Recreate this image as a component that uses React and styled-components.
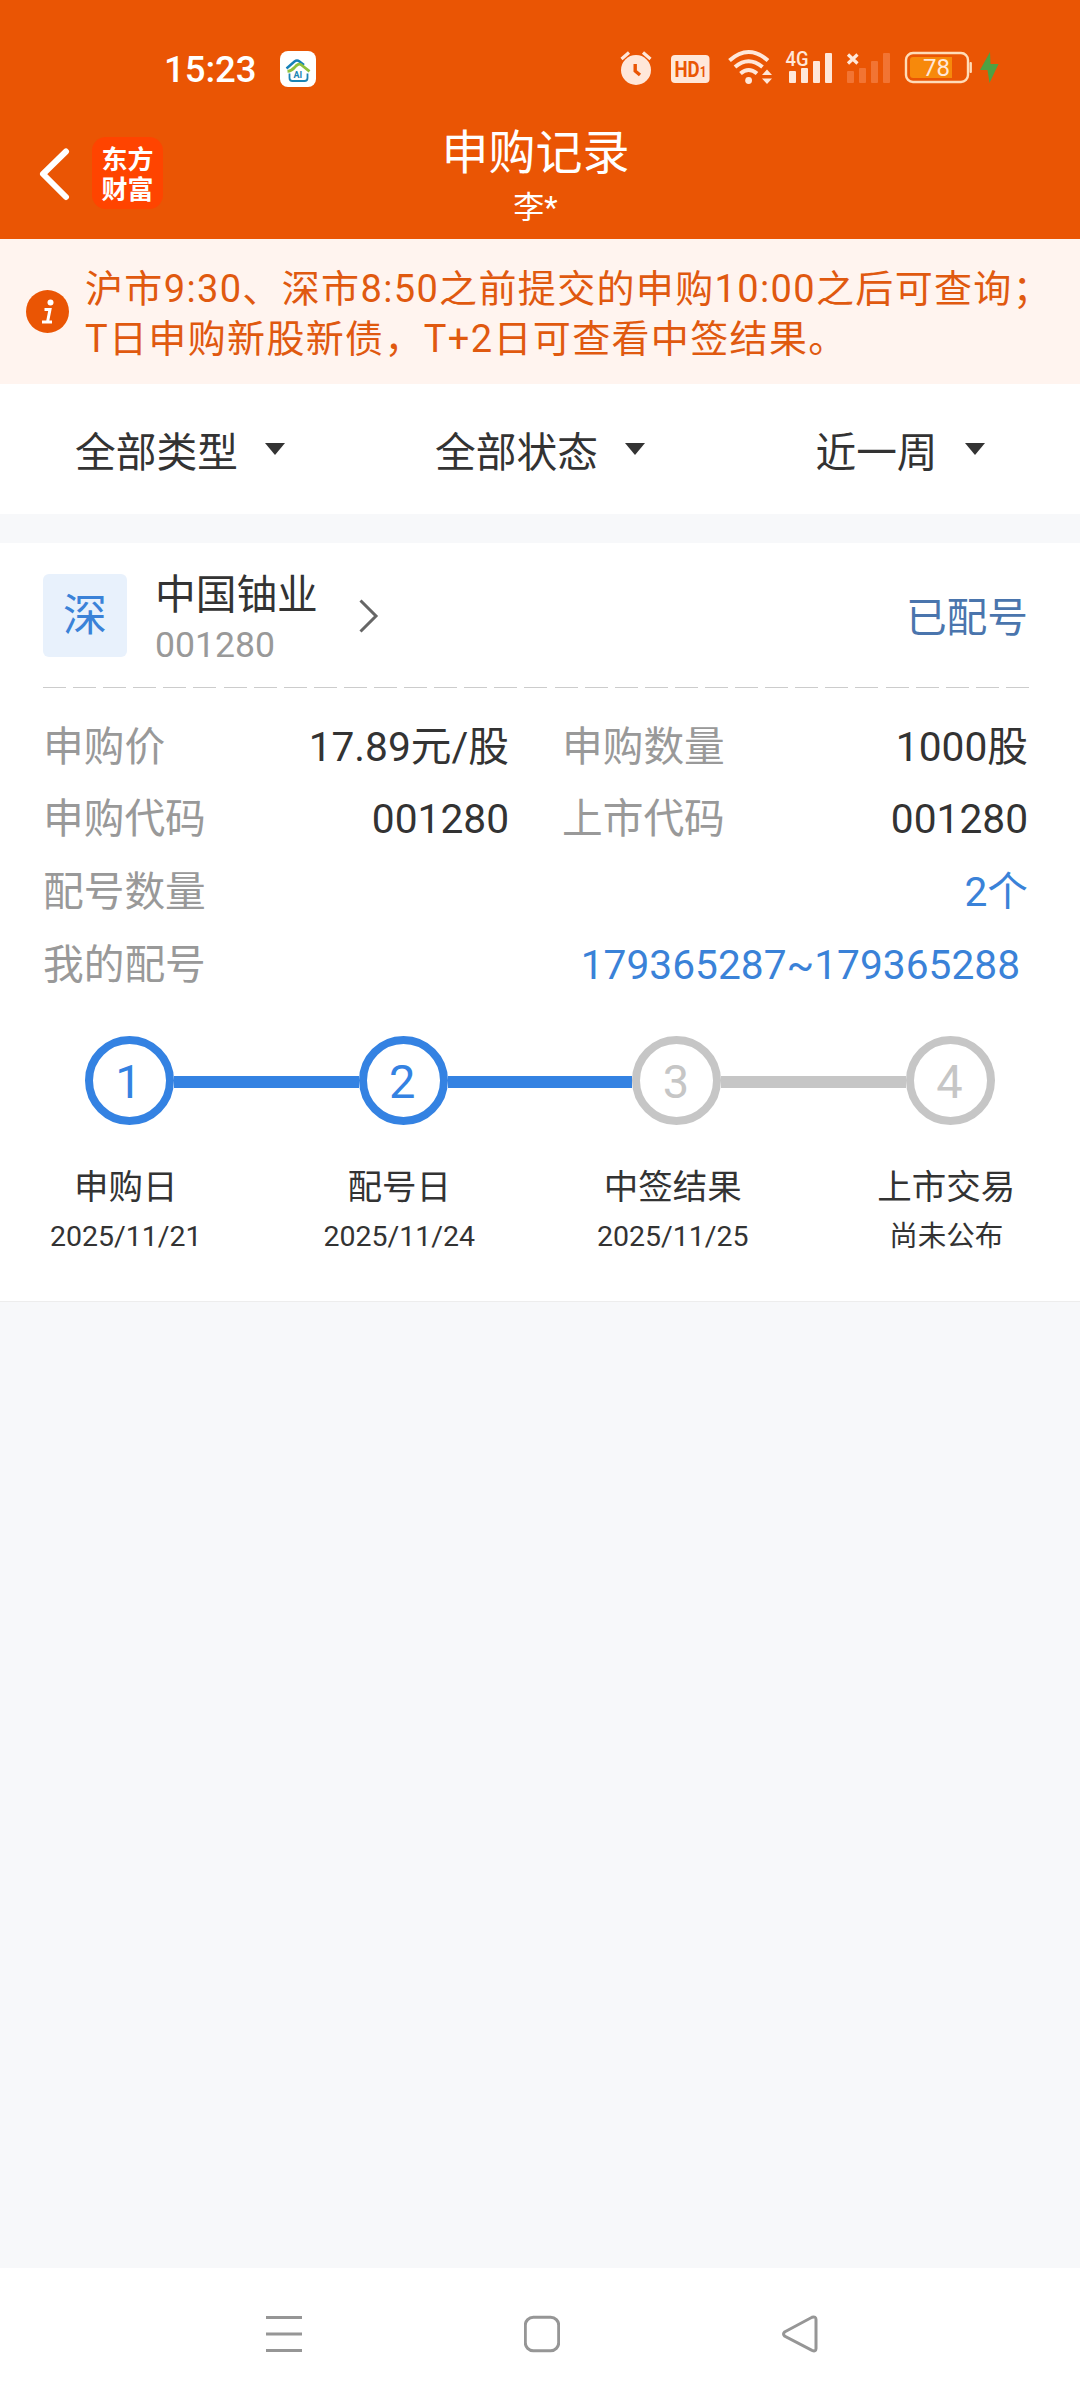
import React from "react";
import styled, { createGlobalStyle } from "styled-components";

const filters = ["全部类型", "全部状态", "近一周"];

const steps = [
  { no: 1, title: "申购日", date: "2025/11/21", done: true, lineDone: true },
  { no: 2, title: "配号日", date: "2025/11/24", done: true, lineDone: true },
  { no: 3, title: "中签结果", date: "2025/11/25", done: false, lineDone: false },
  { no: 4, title: "上市交易", date: "尚未公布", done: false },
];

const StatusBar = () => (
  <StatusRow>
    <Clock>15:23</Clock>
    <AppIcon>
      <svg width="36" height="36" viewBox="0 0 36 36" fill="none">
        <path d="M6.5 15.5 L14.5 8.5 Q17 6.5 19.5 8.5 L24 12" stroke="#1680b8" strokeWidth="2.4" />
        <path d="M7.5 18.3 Q11.5 18 14.5 14.5 Q18.5 9.5 21.5 12 L29.5 18.3" stroke="#8fc13e" strokeWidth="2.8" />
        <path d="M9.5 20.5 V25 Q9.5 28 12.5 28 H24.5 Q27.5 28 27.5 25 V20.5" stroke="#1b84b4" strokeWidth="1.8" />
        <StatusText x="13.5" y="25" $size={9} fill="#1b84b4">AI</StatusText>
      </svg>
    </AppIcon>
    <StatusIcons width="400" height="60" viewBox="610 40 400 60" fill="#ffe7d9">
      <circle cx="636" cy="71" r="15" />
      <path d="M621.5 60 L629 53.5 M650.5 60 L643 53.5" stroke="#ffe7d9" strokeWidth="3.2" />
      <path d="M635.2 65 V72 L640 76" stroke="#ea5504" strokeWidth="3.4" fill="none" />

      <rect x="671" y="56" width="38.5" height="28" rx="4" />
      <StatusText x="674.5" y="78" $size={22} textLength="32" lengthAdjust="spacingAndGlyphs" fill="#ea5504">
        HD<tspan fontSize="14">1</tspan>
      </StatusText>

      <g fill="none" stroke="#ffe7d9" strokeWidth="4">
        <path d="M729.5 61.5 Q748.5 44.5 768 61.5" />
        <path d="M735 68 Q748.5 56.5 762.5 68" />
        <path d="M740.5 74.5 Q748.5 67.5 757 74.5" />
      </g>
      <circle cx="748.6" cy="81.5" r="3.4" />
      <path d="M762 76 L767 70.5 L772 76 Z M762 79.5 H772 L767 85 Z" />

      <StatusText x="785.5" y="67" $size={20} $weight={500} textLength="23" lengthAdjust="spacingAndGlyphs">4G</StatusText>
      <rect x="789" y="72" width="7" height="12" rx="1" />
      <rect x="801" y="69" width="7" height="15" rx="1" />
      <rect x="813" y="62" width="7" height="22" rx="1" />
      <rect x="825" y="54" width="7" height="30" rx="1" />

      <path d="M848 55.5 L857.5 64.5 M857.5 55.5 L848 64.5" stroke="#ffe7d9" strokeWidth="3.2" />
      <g fill="#f27433">
        <rect x="847" y="72" width="7" height="12" rx="1" />
        <rect x="859" y="69" width="7" height="15" rx="1" />
        <rect x="871" y="62" width="7" height="22" rx="1" />
        <rect x="883" y="54" width="7" height="30" rx="1" />
      </g>

      <rect x="906" y="54" width="62" height="29" rx="7" fill="none" stroke="#ffdcb8" strokeWidth="2.4" />
      <path d="M913 58 H952 V79 H913 Q910 79 910 76 V61 Q910 58 913 58 Z" fill="#f7890b" />
      <rect x="969.5" y="63" width="2.4" height="11" rx="1" fill="#ffdcb8" />
      <StatusText x="923" y="77" $size={24} $weight={400} textLength="27" lengthAdjust="spacingAndGlyphs">78</StatusText>
      <path d="M990 53 L980 71 H987.5 L989.5 84 L998.5 65 H990.5 Z" fill="#4ea143" />
    </StatusIcons>
  </StatusRow>
);

const NavBar = () => (
  <NavRow>
    <BackIcon width="32" height="54" viewBox="0 0 32 54">
      <path d="M28 4.5 L5 27 L28 50" />
    </BackIcon>
    <Logo>
      <span>东方</span>
      <span>财富</span>
    </Logo>
    <Titles>
      <Title>申购记录</Title>
      <Owner>李*</Owner>
    </Titles>
  </NavRow>
);

const InfoItem = ({ label, value }) => (
  <Info>
    <Label>{label}</Label>
    <Value>{value}</Value>
  </Info>
);

const App = () => {
  return (
    <Page>
      <GlobalStyle />
      <Header>
        <StatusBar />
        <NavBar />
      </Header>
      <Notice>
        <NoticeIcon width="43" height="43" viewBox="0 0 43 43">
          <circle cx="21.5" cy="21.5" r="21.5" fill="#ea5504" />
          <circle cx="24.5" cy="12.5" r="3" fill="#fff" />
          <path d="M18.5 19.5 H24 L21.5 32 M16 32 H26" stroke="#fff" strokeWidth="3" fill="none" />
        </NoticeIcon>
        <NoticeText>
          <div>沪市9:30、深市8:50之前提交的申购10:00之后可查询；</div>
          <div>T日申购新股新债，T+2日可查看中签结果。</div>
        </NoticeText>
      </Notice>
      <FilterBar>
        {filters.map(name => (
          <Filter key={name}>
            {name}
            <Caret />
          </Filter>
        ))}
      </FilterBar>
      <Card>
        <CardHead>
          <Market>深</Market>
          <Stock>
            <StockName>中国铀业</StockName>
            <StockCode>001280</StockCode>
          </Stock>
          <Arrow width="20" height="34" viewBox="0 0 20 34">
            <path d="M1.5 1.5 L17 17 L1.5 32.5" />
          </Arrow>
          <State>已配号</State>
        </CardHead>
        <Dashes />
        <InfoGrid>
          <InfoItem label="申购价" value="17.89元/股" />
          <InfoItem label="申购数量" value="1000股" />
          <InfoItem label="申购代码" value="001280" />
          <InfoItem label="上市代码" value="001280" />
        </InfoGrid>
        <WideInfo>
          <Label>配号数量</Label>
          <Value $link>2个</Value>
        </WideInfo>
        <WideInfo $inset>
          <Label>我的配号</Label>
          <Value $link>179365287~179365288</Value>
        </WideInfo>
        <Track>
          {steps.map(step => (
            <React.Fragment key={step.no}>
              <Circle $done={step.done}>{step.no}</Circle>
              {step.no < steps.length && <Line $done={step.lineDone} />}
            </React.Fragment>
          ))}
        </Track>
        <StepLabels>
          {steps.map(step => (
            <StepLabel key={step.no}>
              <StepTitle>{step.title}</StepTitle>
              <StepDate>{step.date}</StepDate>
            </StepLabel>
          ))}
        </StepLabels>
      </Card>
      <SystemNav>
        <svg width="36" height="38" viewBox="0 0 36 38">
          <path d="M0 2.5 H36 M0 19 H36 M0 35.5 H36" />
        </svg>
        <svg width="36" height="38" viewBox="0 0 36 38">
          <rect x="1.3" y="2.3" width="33.4" height="33.4" rx="8" />
        </svg>
        <svg width="36" height="38" viewBox="0 0 36 38">
          <path d="M2.5 17 L30 2.3 Q34 1 34 4.5 V33.5 Q34 37 30 35.4 L2.5 21 Q0.5 19 2.5 17 Z" />
        </svg>
      </SystemNav>
    </Page>
  );
};

export default App;

const GlobalStyle = createGlobalStyle`
  body {
    margin: 0;
    background-color: #f7f8fa;
  }

  * {
    box-sizing: border-box;
  }
`;

const Page = styled.div`
  display: flex;
  flex-direction: column;
  width: 1080px;
  height: 2400px;

  font-family: Roboto, "Noto Sans CJK SC", sans-serif;
  font-size: 40.7px;
  font-weight: 400;
  color: #333;
  background-color: #f7f8fa;
  white-space: nowrap;
`;

const Header = styled.header`
  height: 239px;
  color: #fff;
  background-color: #ea5504;
`;

const StatusRow = styled.div`
  display: flex;
  align-items: center;
  height: 119px;
  padding: 19px 70px 0 164px;
`;

const Clock = styled.div`
  width: 116px;
  font-size: 36.5px;
  font-weight: 500;
`;

const AppIcon = styled.div`
  width: 36px;
  height: 36px;
  border-radius: 8px;
  background-color: #fff;
`;

const StatusIcons = styled.svg`
  margin-left: auto;
`;

const StatusText = styled.text`
  font-size: ${props => props.$size}px;
  font-weight: ${props => props.$weight || 700};
`;

const NavRow = styled.div`
  display: grid;
  grid-template-columns: 54px 72px 1fr 173px;
  height: 120px;
  padding-left: 38px;
`;

const BackIcon = styled.svg`
  margin-top: 28px;
  fill: none;
  stroke: #fff;
  stroke-width: 6;
  stroke-linecap: round;
  stroke-linejoin: round;
`;

const Logo = styled.div`
  display: flex;
  flex-direction: column;
  align-items: center;
  justify-content: center;
  width: 71px;
  height: 72px;
  margin-top: 18px;

  border-radius: 14px;
  font-family: "Noto Sans CJK SC", sans-serif;
  font-size: 26px;
  font-weight: 700;
  line-height: 30px;
  background-color: #ff4400;
`;

const Titles = styled.div`
  display: flex;
  flex-direction: column;
  align-items: center;
`;

const Title = styled.h1`
  margin: 5px 0 0;
  font-size: 47px;
  font-weight: 400;
  line-height: 58px;
`;

const Owner = styled.div`
  margin-top: 4px;
  font-size: 31px;
  line-height: 44px;
`;

const Notice = styled.section`
  display: flex;
  height: 145px;
  padding: 25px 0 0 26px;
  background-color: #fff4ef;
`;

const NoticeIcon = styled.svg`
  margin-top: 26px;
`;

const NoticeText = styled.div`
  margin-left: 16px;
  font-size: 38px;
  letter-spacing: 1.35px;
  line-height: 50px;
  color: #e0590f;
`;

const FilterBar = styled.div`
  display: grid;
  grid-template-columns: repeat(3, 1fr);
  height: 130px;
  background-color: #fff;
`;

const Filter = styled.div`
  display: flex;
  align-items: center;
  justify-content: center;
`;

const Caret = styled.i`
  margin-left: 27px;
  border: 10px solid transparent;
  border-top: 12px solid #333;
  border-bottom: 0;
`;

const Card = styled.section`
  height: 759px;
  margin-top: 29px;
  padding: 0 52px 0 43px;
  border-bottom: 1px solid #ededed;
  background-color: #fff;
`;

const CardHead = styled.div`
  display: flex;
  height: 144px;
  padding-top: 31px;
`;

const Market = styled.div`
  width: 84px;
  height: 83px;
  border-radius: 6px;
  font-size: 44px;
  line-height: 85px;
  text-align: center;
  color: #3a82d8;
  background-color: #e8f1fc;
`;

const Stock = styled.div`
  width: 163px;
  margin-left: 28px;
`;

const StockName = styled.div`
  margin-top: -7px;
  line-height: 56px;
`;

const StockCode = styled.div`
  font-size: 35.6px;
  line-height: 44px;
  color: #999;
`;

const Arrow = styled.svg`
  margin: 25px 0 0 41px;
  fill: none;
  stroke: #666;
  stroke-width: 3;
`;

const State = styled.div`
  margin: 15px 0 0 auto;
  line-height: 58px;
  color: #4a75ad;
`;

const Dashes = styled.div`
  height: 1px;
  width: 986px;
  background: repeating-linear-gradient(to right, #ccc 0 23px, transparent 23px 30.09px);
`;

const InfoGrid = styled.div`
  display: grid;
  grid-template-columns: 466px 466px;
  column-gap: 53px;
  padding-top: 23px;
`;

const Info = styled.div`
  display: flex;
  justify-content: space-between;
  height: 72px;
  line-height: 72px;
`;

const WideInfo = styled(Info)`
  height: 73px;
  padding-right: ${props => (props.$inset ? 8 : 0)}px;
  line-height: 74px;
`;

const Label = styled.span`
  color: #999;
`;

const Value = styled.span`
  color: ${props => (props.$link ? "#3a82d8" : "#333")};
`;

const Track = styled.div`
  display: flex;
  align-items: center;
  width: 910px;
  margin: 35px 0 0 42px;
`;

const Circle = styled.div`
  flex: none;
  width: 89px;
  height: 89px;
  padding-right: 2px;
  border: 8.5px solid;
  border-radius: 50%;
  font-size: 47px;
  line-height: 75px;
  text-align: center;
  color: ${props => (props.$done ? "#3482e2" : "#c6c6c6")};
`;

const Line = styled.div`
  flex: 1;
  height: 12px;
  margin-top: 3px;
  background-color: ${props => (props.$done ? "#3482e2" : "#c6c6c6")};
`;

const StepLabels = styled.div`
  display: grid;
  grid-template-columns: repeat(4, 273.5px);
  margin: 37px 0 0 -54px;
  text-align: center;
`;

const StepLabel = styled.div`
  display: flex;
  flex-direction: column;
`;

const StepTitle = styled.div`
  font-size: 34.5px;
  line-height: 50px;
`;

const StepDate = styled.div`
  font-size: 28.5px;
  line-height: 50px;
`;

const SystemNav = styled.nav`
  display: flex;
  justify-content: space-between;
  height: 132px;
  margin-top: auto;
  padding: 47px 262px 0 266px;
  background-color: #fff;

  svg {
    fill: none;
    stroke: #969696;
    stroke-width: 3;
  }
`;
